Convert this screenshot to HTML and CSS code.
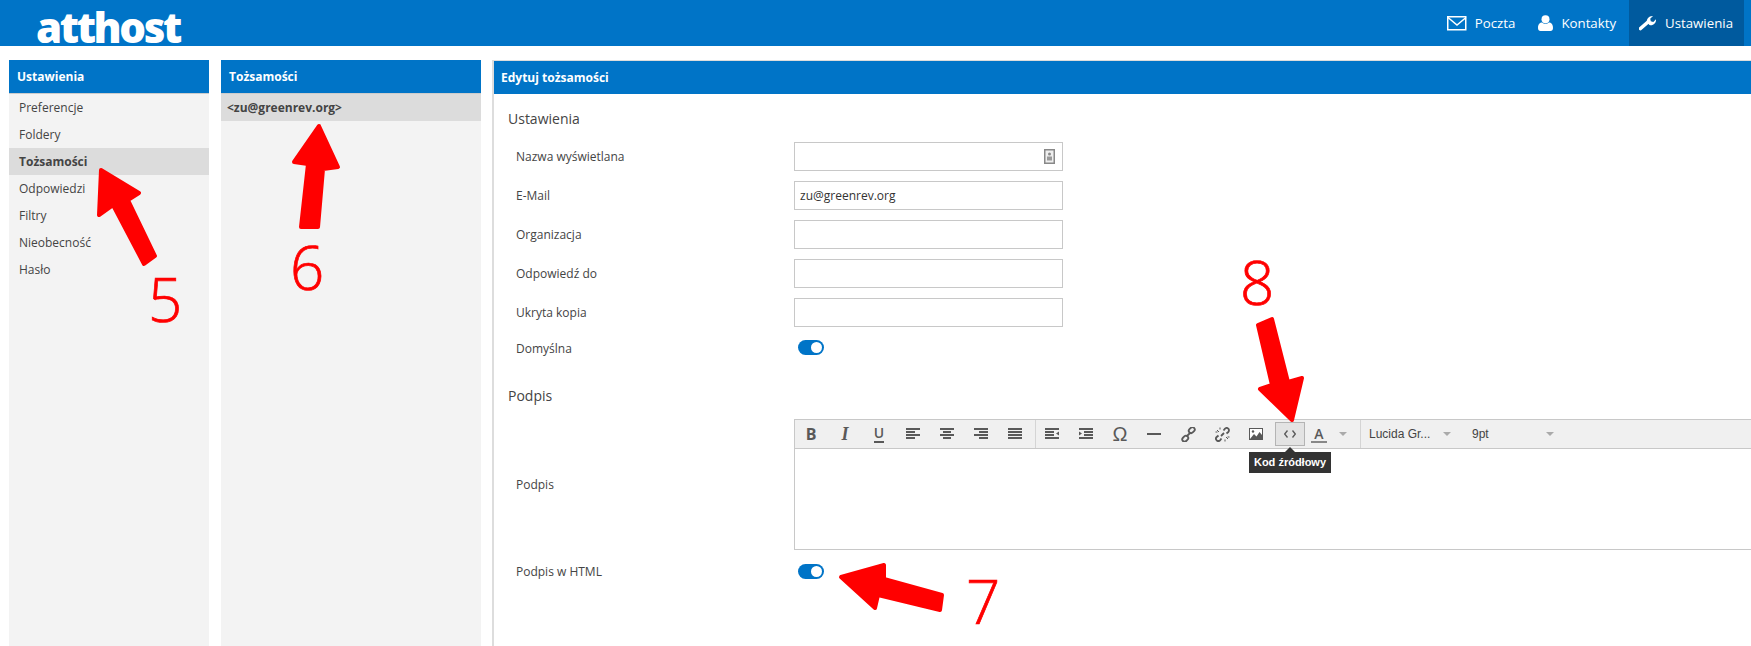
FILE: index.html
```html
<!DOCTYPE html>
<html lang="pl">
<head>
    <meta charset="UTF-8">
    <meta name="viewport" content="width=device-width, initial-scale=1.0">
    <title>atthost - Ustawienia</title>
    <link rel="stylesheet" href="styles.css">
</head>
<body>
    <header class="topbar">
        <div class="logo">atthost</div>
        <nav class="topnav">
            <a class="topnav-item">
                <svg width="20" height="15" viewBox="0 0 20 15"><rect x="0.75" y="0.75" width="18" height="13" fill="none" stroke="#fff" stroke-width="1.5"/><path d="M1 1.5l9 7.5 9-7.5" fill="none" stroke="#fff" stroke-width="1.5"/></svg>
                Poczta
            </a>
            <a class="topnav-item">
                <svg width="15" height="16" viewBox="0 0 15 16"><circle cx="7.5" cy="4.2" r="4" fill="#fff"/><path d="M0 13c0-4 2-5.500 4-5.500 1 1 2 1.300 3.500 1.300s2.500-.3 3.500-1.300c2 0 4 1.500 4 5.500 0 2-1 3-2.500 3h-10c-1.500 0-2.500-1-2.500-3z" fill="#fff"/></svg>
                Kontakty
            </a>
            <a class="topnav-item active">
                <svg width="18" height="17" viewBox="0 0 18 17"><path d="M1.500 13.500l7.500-6.500" stroke="#fff" stroke-width="3.600" stroke-linecap="round"/><path d="M8 7.500c-.8-3.500 2-6.800 6-6.500l-2.800 2.800.6 2.500 2.500.6 2.700-2.700c.4 4-3.200 6.800-6.500 5.800z" fill="#fff"/></svg>
                Ustawienia
            </a>
        </nav>
    </header>

    <main class="columns">
        <section class="panel panel-sections">
            <h2 class="panel-title">Ustawienia</h2>
            <ul class="list">
                <li>Preferencje</li>
                <li>Foldery</li>
                <li class="selected">Tożsamości</li>
                <li>Odpowiedzi</li>
                <li>Filtry</li>
                <li>Nieobecność</li>
                <li>Hasło</li>
            </ul>
        </section>

        <section class="panel panel-identities">
            <h2 class="panel-title">Tożsamości</h2>
            <ul class="list">
                <li class="selected identity">&lt;zu@greenrev.org&gt;</li>
            </ul>
        </section>

        <section class="panel-edit">
            <h2 class="panel-title">Edytuj tożsamości</h2>

            <h3 class="group-title">Ustawienia</h3>
            <div class="field">
                <label>Nazwa wyświetlana</label>
                <div class="input">
                    <svg class="book-icon" width="11" height="15" viewBox="0 0 11 15"><rect x="0.750" y="0.750" width="9.500" height="13.500" fill="#eee" stroke="#888" stroke-width="1.500"/><circle cx="5.500" cy="5" r="1.500" fill="#888"/><rect x="3" y="7.500" width="5" height="4" fill="#999"/></svg>
                </div>
            </div>
            <div class="field">
                <label>E-Mail</label>
                <div class="input">zu@greenrev.org</div>
            </div>
            <div class="field">
                <label>Organizacja</label>
                <div class="input"></div>
            </div>
            <div class="field">
                <label>Odpowiedź do</label>
                <div class="input"></div>
            </div>
            <div class="field">
                <label>Ukryta kopia</label>
                <div class="input"></div>
            </div>
            <div class="field field-toggle">
                <label>Domyślna</label>
                <span class="toggle"></span>
            </div>

            <h3 class="group-title group-signature">Podpis</h3>
            <div class="field field-editor">
                <label>Podpis</label>
                <div class="editor">
                    <div class="toolbar">
                        <div class="tool-group">
                            <span class="tool tool-b">B</span>
                            <span class="tool tool-i">I</span>
                            <span class="tool tool-u">U</span>
                            <span class="tool"><svg width="14" height="12" viewBox="0 0 14 12"><path d="M0 0h14v2H0zM0 3h9v2H0zM0 6h14v2H0zM0 9h9v2H0z" fill="#595959"/></svg></span>
                            <span class="tool"><svg width="14" height="12" viewBox="0 0 14 12"><path d="M0 0h14v2H0zM3 3h8v2H3zM0 6h14v2H0zM3 9h8v2H3z" fill="#595959"/></svg></span>
                            <span class="tool"><svg width="14" height="12" viewBox="0 0 14 12"><path d="M0 0h14v2H0zM5 3h9v2H5zM0 6h14v2H0zM5 9h9v2H5z" fill="#595959"/></svg></span>
                            <span class="tool"><svg width="14" height="12" viewBox="0 0 14 12"><path d="M0 0h14v2H0zM0 3h14v2H0zM0 6h14v2H0zM0 9h14v2H0z" fill="#595959"/></svg></span>
                        </div>
                        <div class="tool-group">
                            <span class="tool"><svg width="14" height="12" viewBox="0 0 14 12"><path d="M0 0h14v2H0zM0 3h9v2H0zM0 6h9v2H0zM0 9h14v2H0zM14 3.500v4l-3-2z" fill="#595959"/></svg></span>
                            <span class="tool"><svg width="14" height="12" viewBox="0 0 14 12"><path d="M0 0h14v2H0zM5 3h9v2H5zM5 6h9v2H5zM0 9h14v2H0zM0 3.500v4l3-2z" fill="#595959"/></svg></span>
                            <span class="tool tool-omega">Ω</span>
                            <span class="tool"><svg width="14" height="2" viewBox="0 0 14 2"><path d="M0 0h14v2H0z" fill="#595959"/></svg></span>
                            <span class="tool"><svg width="15" height="15" viewBox="0 0 15 15"><g fill="none" stroke="#595959" stroke-width="1.800"><rect x="7.500" y="0.800" width="6.500" height="4.600" rx="2.300" transform="rotate(-45 10.750 3.100)"/><rect x="1" y="9.400" width="6.500" height="4.600" rx="2.300" transform="rotate(-45 4.250 11.700)"/><path d="M5.500 9.500l4-4"/></g></svg></span>
                            <span class="tool"><svg width="15" height="15" viewBox="0 0 15 15"><g fill="none" stroke="#595959" stroke-width="1.800"><path d="M8.500 3.500l1.500-1.800a2.300 2.300 0 0 1 3.300 3.300l-1.800 1.500M6.500 11.500l-1.500 1.800a2.300 2.300 0 0 1-3.300-3.300l1.800-1.500M6 9l3-3"/></g><path d="M2 3l2 2M5 0.500v2M0.500 5h2M13 12l-2-2M10 14.500v-2M14.500 10h-2" stroke="#595959" stroke-width="1"/></svg></span>
                            <span class="tool"><svg width="14" height="12" viewBox="0 0 14 12"><rect x="0.500" y="0.500" width="13" height="11" fill="#fff" stroke="#595959"/><path d="M1 11l4-5 2.500 2.500L10.500 4 13 7v4.500H1z" fill="#595959"/><circle cx="4" cy="3.500" r="1.200" fill="#595959"/></svg></span>
                            <span class="tool tool-hover">
                                <svg width="12" height="8" viewBox="0 0 12 8"><path d="M3.500 0.500L0.700 4l2.800 3.500M8.500 0.500L11.300 4 8.500 7.500" fill="none" stroke="#595959" stroke-width="1.300"/></svg>
                                <span class="tooltip">Kod źródłowy</span>
                            </span>
                            <span class="tool tool-color"><span class="color-a">A</span><i class="caret"></i></span>
                        </div>
                        <div class="select select-font">Lucida Gr...<i class="caret"></i></div>
                        <div class="select select-size">9pt<i class="caret"></i></div>
                    </div>
                    <div class="editor-body"></div>
                </div>
            </div>
            <div class="field field-toggle field-html">
                <label>Podpis w HTML</label>
                <span class="toggle"></span>
            </div>
        </section>
    </main>

    <!-- red annotations drawn over the screenshot -->
    <svg class="marks" width="1751" height="646" viewBox="0 0 1751 646">
        <g fill="#f00" stroke="#f00" stroke-width="4" stroke-linejoin="round">
            <path d="M101 170L139 193 128 200 155 256 144 264 113 205 99 215z"/>
            <path d="M319 126L338 167 323 169 318 227 301 227 308 164 294 162z"/>
            <path d="M841 577L884 565 884 579 942 595 940 610 878 595 875 608z"/>
            <path d="M1258 325L1272 319 1288 382 1302 378 1292 420 1260 389 1272 385z"/>
        </g>
    </svg>
    <span class="mark-num num-5">5</span>
    <span class="mark-num num-6">6</span>
    <span class="mark-num num-7">7</span>
    <span class="mark-num num-8">8</span>
</body>
</html>
```

FILE: styles.css
```css
html, body {
    height: 100%;
}
body {
    position: relative;
    margin: 0;
    overflow: hidden;
    background-color: #fff;
    font-family: 'Open Sans', 'Noto Sans', sans-serif;
    font-size: 12px;
    color: #444;
}
.topbar {
    display: flex;
    justify-content: space-between;
    height: 46px;
    background-color: #0074c7;
}
.logo {
    padding-left: 36px;
    padding-top: 8px;
    font-size: 42px;
    font-weight: 800;
    line-height: 38px;
    letter-spacing: -2.4px;
    color: #fff;
}
.topnav {
    display: flex;
    padding-right: 7px;
}
.topnav-item {
    display: flex;
    align-items: center;
    gap: 8px;
    padding: 0 13px 0 10px;
    font-size: 13.25px;
    color: #fff;
}
.topnav-item.active {
    padding-right: 11px;
    background-color: #005a9e;
}
.columns {
    display: flex;
    height: 600px;
    padding: 14px 0 0 9px;
    box-sizing: border-box;
}
.panel {
    background-color: #f3f3f3;
}
.panel-sections {
    width: 200px;
    margin-right: 12px;
}
.panel-identities {
    width: 260px;
    margin-right: 11px;
}
.panel-title {
    height: 33px;
    margin: 0;
    padding-left: 8px;
    border-bottom: 1px solid #ccc;
    background-color: #0074c7;
    font-size: 12px;
    font-weight: 700;
    line-height: 33px;
    color: #fff;
}
.list {
    margin: 0;
    padding: 0;
    list-style: none;
}
.list li {
    height: 27px;
    padding-left: 10px;
    line-height: 27px;
}
.list .selected {
    background-color: #dcdcdc;
    font-weight: 700;
}
.list .identity {
    padding-left: 6px;
}
.panel-edit {
    flex: 1;
    border-left: 2px solid #ddd;
    border-top: 1px solid #ddd;
}
.panel-edit .panel-title {
    padding-left: 7px;
    border-bottom: 0;
}
.group-title {
    height: 20px;
    margin: 15px 0 13px 14px;
    font-size: 14px;
    font-weight: 400;
    line-height: 20px;
}
.group-signature {
    margin: 0 0 13px 14px;
}
.field {
    display: flex;
    align-items: center;
    margin-bottom: 10px;
    padding-left: 22px;
}
.field label {
    width: 278px;
    flex: none;
}
.input {
    position: relative;
    width: 262px;
    height: 27px;
    border: 1px solid #c8c8c8;
    padding-left: 5px;
    line-height: 27px;
    color: #333;
}
.book-icon {
    position: absolute;
    top: 6px;
    right: 7px;
}
.field-toggle {
    height: 15px;
    margin: 13px 0 31px;
}
.field-toggle label {
    padding-top: 2px;
}
.toggle {
    position: relative;
    width: 26px;
    height: 15px;
    margin-left: 4px;
    border-radius: 8px;
    background-color: #0074c7;
}
.toggle::after {
    content: "";
    position: absolute;
    top: 2px;
    right: 2px;
    width: 11px;
    height: 11px;
    border-radius: 50%;
    background-color: #fff;
}
.field-editor {
    margin-bottom: 0;
}
.editor {
    flex: 1;
    margin-right: -2px;
    border: 1px solid #c8c8c8;
}
.toolbar {
    display: flex;
    align-items: center;
    height: 28px;
    border-bottom: 1px solid #c8c8c8;
    background-color: #f0f0f0;
}
.tool-group {
    display: flex;
    align-items: center;
    gap: 4px;
    height: 100%;
    padding: 0 5px 0 1px;
    border-right: 1px solid #d4d4d4;
}
.tool {
    position: relative;
    display: flex;
    align-items: center;
    justify-content: center;
    box-sizing: border-box;
    width: 30px;
    height: 24px;
    font-family: 'Liberation Sans', Arial, sans-serif;
    color: #595959;
}
.tool-b {
    font-family: 'Open Sans', sans-serif;
    font-size: 16px;
    font-weight: 700;
}
.tool-i {
    font-family: 'Liberation Serif', serif;
    font-size: 18px;
    font-weight: 700;
    font-style: italic;
}
.tool-u {
    padding-bottom: 2px;
    font-family: 'Open Sans', sans-serif;
    font-size: 14px;
    font-weight: 600;
    line-height: 14px;
}
.tool-u::after {
    content: "";
    position: absolute;
    left: 10px;
    top: 19px;
    width: 10px;
    height: 2px;
    background-color: #595959;
}
.tool-omega {
    font-size: 20px;
}
.tool-hover {
    border: 1px solid #b4b4b4;
    background-color: #e3e3e3;
}
.tooltip {
    position: absolute;
    top: 29px;
    left: -27px;
    width: 82px;
    height: 21px;
    background-color: #333;
    font-size: 11px;
    font-weight: 700;
    line-height: 21px;
    text-align: center;
    color: #fff;
}
.tooltip::before {
    content: "";
    position: absolute;
    top: -5px;
    left: 36px;
    border-left: 5px solid transparent;
    border-right: 5px solid transparent;
    border-bottom: 5px solid #333;
}
.tool-color {
    width: 46px;
    justify-content: flex-start;
    padding-left: 2px;
    gap: 12px;
}
.color-a {
    width: 16px;
    border-bottom: 2px solid #888;
    font-family: 'Open Sans', sans-serif;
    font-size: 14px;
    font-weight: 600;
    line-height: 15px;
    text-align: center;
}
.caret {
    display: inline-block;
    width: 0;
    border-left: 4px solid transparent;
    border-right: 4px solid transparent;
    border-top: 4px solid #aaa;
}
.select {
    display: flex;
    align-items: center;
    justify-content: space-between;
    box-sizing: border-box;
    color: #444;
    font-family: 'Liberation Sans', Arial, sans-serif;
}
.select-font {
    width: 82px;
    margin-left: 8px;
}
.select-size {
    width: 82px;
    margin-left: 21px;
}
.editor-body {
    height: 100px;
    background-color: #fff;
}
.field-html {
    margin-top: 14px;
}
.field-html label {
    padding-top: 0;
}
.marks {
    position: absolute;
    top: 0;
    left: 0;
    pointer-events: none;
}
.mark-num {
    position: absolute;
    font-family: 'Open Sans', sans-serif;
    font-size: 60px;
    font-weight: 300;
    line-height: 60px;
    color: #f00;
    -webkit-text-stroke: 0.7px #f00;
}
.num-5 { left: 148px; top: 269px; }
.num-6 { left: 290px; top: 237px; }
.num-7 { left: 966px; top: 571px; }
.num-8 { left: 1240px; top: 252px; }
```
